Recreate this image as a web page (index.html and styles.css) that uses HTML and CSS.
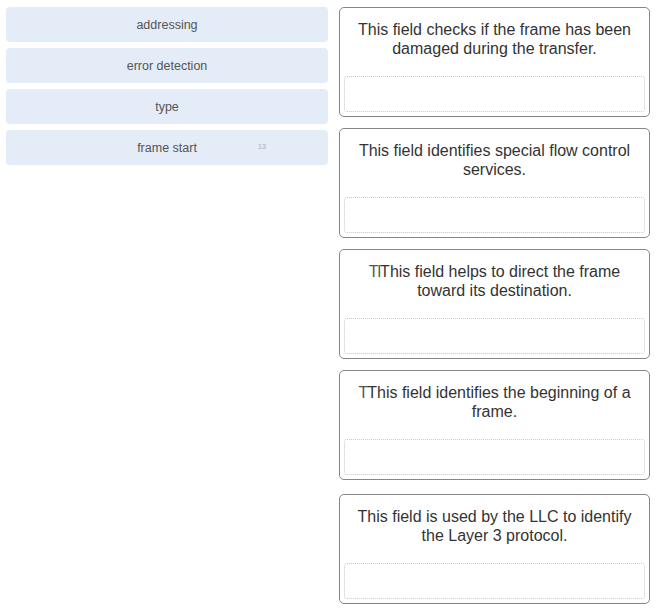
FILE: index.html
```html
<!DOCTYPE html>
<html lang="en">
<head>
  <meta charset="UTF-8">
  <meta name="viewport" content="width=device-width, initial-scale=1.0">
  <title>Frame Fields</title>
  <link rel="stylesheet" href="styles.css">
</head>
<body>
  <div class="board">
    <div class="options">
      <div class="option">addressing</div>
      <div class="option">error detection</div>
      <div class="option">type</div>
      <div class="option">frame start <span class="mark">13</span></div>
    </div>
    <div class="targets">
      <div class="target">
        <p class="prompt">This field checks if the frame has been damaged during the transfer.</p>
        <div class="drop"></div>
      </div>
      <div class="target">
        <p class="prompt">This field identifies special flow control services.</p>
        <div class="drop"></div>
      </div>
      <div class="target">
        <p class="prompt"><span class="ghost">Tl</span>This field helps to direct the frame toward its destination.</p>
        <div class="drop"></div>
      </div>
      <div class="target">
        <p class="prompt"><span class="ghost">T</span>This field identifies the beginning of a frame.</p>
        <div class="drop"></div>
      </div>
      <div class="target last">
        <p class="prompt">This field is used by the LLC to identify the Layer 3 protocol.</p>
        <div class="drop"></div>
      </div>
    </div>
  </div>
</body>
</html>
```

FILE: styles.css
```css
body {
  margin: 0;
  background-color: #fff;
  font-family: "Liberation Sans", Arial, sans-serif;
}

.board {
  display: grid;
  grid-template-columns: 322px 311px;
  column-gap: 11px;
  align-items: start;
  padding: 7px 0 0 6px;
}

.options {
  display: flex;
  flex-direction: column;
  gap: 6px;
}

.option {
  position: relative;
  height: 35px;
  display: flex;
  align-items: center;
  justify-content: center;
  background-color: #e4ecf7;
  border-radius: 4px;
  font-size: 12.5px;
  color: #555;
}

.mark {
  position: absolute;
  left: 252px;
  top: 13px;
  font-size: 7px;
  color: #aab;
}

.targets {
  display: flex;
  flex-direction: column;
  gap: 11px;
}

.target {
  height: 110px;
  box-sizing: border-box;
  display: flex;
  flex-direction: column;
  padding: 12px 4px 4px;
  border: 1px solid #868686;
  border-radius: 5px;
  background-color: #fff;
}

.target.last {
  margin-top: 3px;
}

.prompt {
  margin: 0;
  padding: 0 6px;
  text-align: center;
  font-size: 16px;
  line-height: 19px;
  color: #333;
}

.ghost {
  color: #555;
  letter-spacing: -1px;
}

.drop {
  margin-top: auto;
  height: 36px;
  box-sizing: border-box;
  border: 1px dotted #c4c8cc;
  border-radius: 3px;
}
```
